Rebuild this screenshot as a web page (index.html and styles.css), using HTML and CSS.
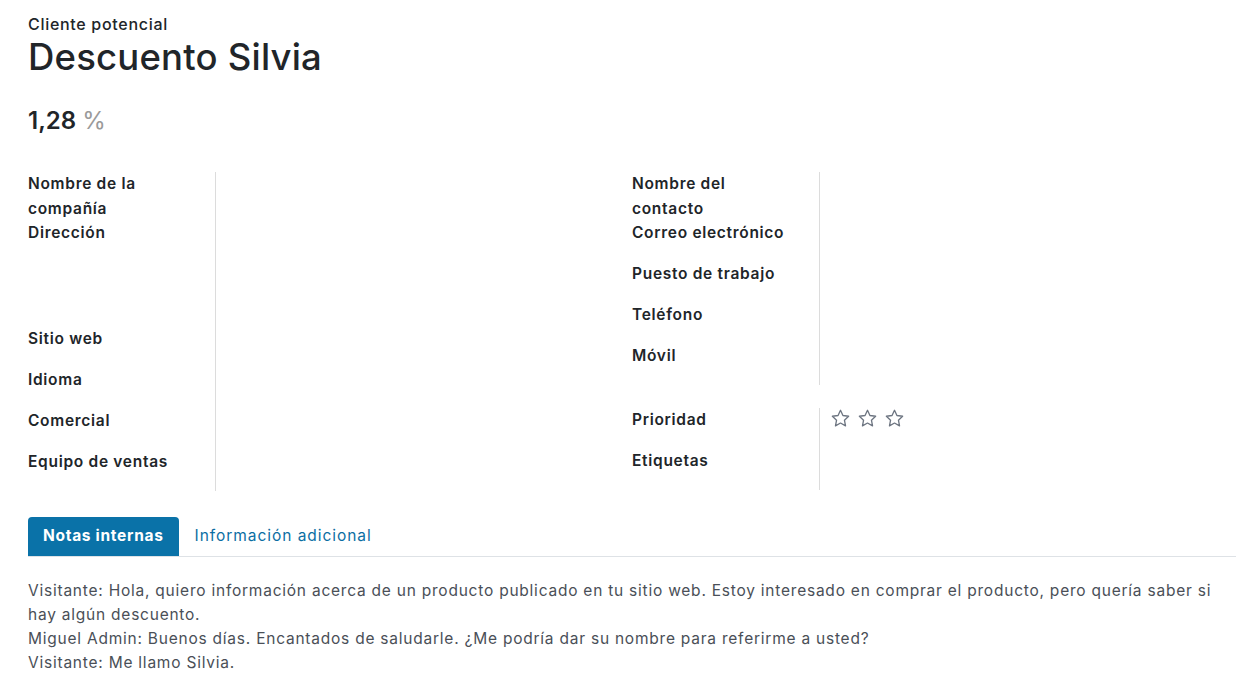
FILE: index.html
```html
<!DOCTYPE html>
<html lang="es">
<head>
<meta charset="utf-8">
<title>Descuento Silvia</title>
<link rel="stylesheet" href="styles.css">
</head>
<body>
<div class="sheet">
  <div class="subtitle">Cliente potencial</div>
  <h1 class="title">Descuento Silvia</h1>
  <div class="amount">1,28 <span class="pct">%</span></div>

  <div class="groups">
    <div class="group">
      <div class="row r-company"><div class="label">Nombre de la compañía</div><div class="value"></div></div>
      <div class="row r-address"><div class="label">Dirección</div><div class="value"></div></div>
      <div class="row"><div class="label">Sitio web</div><div class="value"></div></div>
      <div class="row"><div class="label">Idioma</div><div class="value"></div></div>
      <div class="row"><div class="label">Comercial</div><div class="value"></div></div>
      <div class="row"><div class="label">Equipo de ventas</div><div class="value"></div></div>
    </div>
    <div class="group">
      <div class="subgroup">
        <div class="row r-company"><div class="label">Nombre del contacto</div><div class="value"></div></div>
        <div class="row"><div class="label">Correo electrónico</div><div class="value"></div></div>
        <div class="row"><div class="label">Puesto de trabajo</div><div class="value"></div></div>
        <div class="row"><div class="label">Teléfono</div><div class="value"></div></div>
        <div class="row"><div class="label">Móvil</div><div class="value"></div></div>
      </div>
      <div class="subgroup second">
        <div class="row"><div class="label">Prioridad</div>
          <div class="value stars">
            <svg class="star" viewBox="0 0 24 24"><path d="M12 2.6l2.8 6 6.5.8-4.8 4.5 1.25 6.5L12 17.2l-5.75 3.2 1.25-6.5-4.8-4.5 6.5-.8z"/></svg>
            <svg class="star" viewBox="0 0 24 24"><path d="M12 2.6l2.8 6 6.5.8-4.8 4.5 1.25 6.5L12 17.2l-5.75 3.2 1.25-6.5-4.8-4.5 6.5-.8z"/></svg>
            <svg class="star" viewBox="0 0 24 24"><path d="M12 2.6l2.8 6 6.5.8-4.8 4.5 1.25 6.5L12 17.2l-5.75 3.2 1.25-6.5-4.8-4.5 6.5-.8z"/></svg>
          </div>
        </div>
        <div class="row"><div class="label">Etiquetas</div><div class="value"></div></div>
      </div>
    </div>
  </div>

  <div class="tabs">
    <div class="tab active">Notas internas</div>
    <div class="tab">Información adicional</div>
  </div>
  <div class="notes">
    <p>Visitante: Hola, quiero información acerca de un producto publicado en tu sitio web. Estoy interesado en comprar el producto, pero quería saber si hay algún descuento.</p>
    <p>Miguel Admin: Buenos días. Encantados de saludarle. ¿Me podría dar su nombre para referirme a usted?</p>
    <p>Visitante: Me llamo Silvia.</p>
  </div>
</div>
</body>
</html>
```

FILE: styles.css
```css
* { box-sizing: border-box; }
html, body { margin: 0; padding: 0; background: #fff; }
body {
  font-family: Inter, "Noto Sans", "DejaVu Sans", sans-serif;
  color: #212529;
}
.sheet {
  width: 1236px;
  padding: 12px 0 0 28px;
}
.subtitle {
  font-size: 16px;
  font-weight: 500;
  line-height: 24px;
  letter-spacing: 0.7px;
}
.title {
  margin: 0;
  font-size: 36.5px;
  font-weight: 500;
  line-height: 42px;
  letter-spacing: 0.2px;
}
.amount {
  margin-top: 28px;
  font-size: 24px;
  font-weight: 600;
  line-height: 30px;
}
.pct { color: #9a9a9a; font-weight: 400; }

.groups {
  display: grid;
  grid-template-columns: 604px 1fr;
  margin-top: 36px;
}
.row {
  display: grid;
  grid-template-columns: 187px 1fr;
  height: 41px;
}
.row.r-company { height: 49px; }
.row.r-address { height: 106px; }
.label {
  font-size: 15.5px;
  font-weight: 600;
  line-height: 24.5px;
  letter-spacing: 0.7px;
  padding-right: 28px;
}
.value {
  border-left: 1px solid #dcdcdc;
  padding-left: 10px;
}
.subgroup.second { margin-top: 23px; }
.stars {
  display: flex;
  gap: 6px;
  padding-top: 0;
}
.star {
  width: 21px;
  height: 21px;
  fill: none;
  stroke: #6c7480;
  stroke-width: 1.5;
  stroke-linejoin: round;
}

.tabs {
  display: flex;
  align-items: flex-end;
  margin-top: 25px;
  border-bottom: 1px solid #dee2e6;
  height: 41px;
  padding-bottom: 1px;
}
.tab {
  height: 39px;
  line-height: 40px;
  padding: 0 15px;
  font-size: 15.5px;
  letter-spacing: 0.95px;
  color: #0b6ea3;
}
.tab.active {
  background: #0a72a8;
  color: #fff;
  font-weight: 700;
  line-height: 38px;
  letter-spacing: 0.7px;
  border-radius: 4px 4px 0 0;
  margin-bottom: -1px;
}
.tab + .tab { padding-left: 16px; }

.notes {
  margin-top: 22px;
  font-size: 15.5px;
  line-height: 24px;
  letter-spacing: 0.77px;
  color: #4a4f57;
}
.notes p { margin: 0; }
```
